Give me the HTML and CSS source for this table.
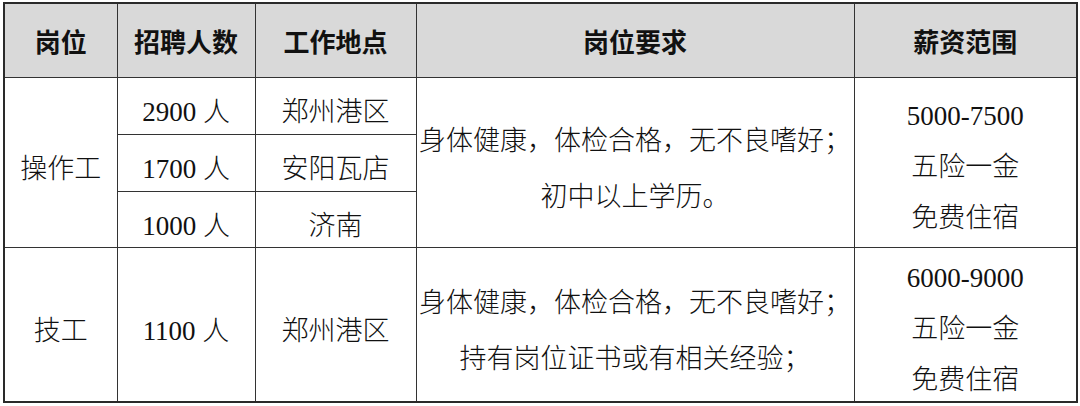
FILE: index.html
```html
<!DOCTYPE html>
<html lang="zh-CN">
<head>
<meta charset="utf-8">
<title>招聘岗位</title>
<link rel="stylesheet" href="styles.css">
</head>
<body>
<table class="jobs">
  <colgroup>
    <col class="c-pos">
    <col class="c-num">
    <col class="c-loc">
    <col class="c-req">
    <col class="c-pay">
  </colgroup>
  <thead>
    <tr class="head">
      <th>岗位</th>
      <th>招聘人数</th>
      <th>工作地点</th>
      <th>岗位要求</th>
      <th>薪资范围</th>
    </tr>
  </thead>
  <tbody>
    <tr class="sub">
      <td rowspan="3">操作工</td>
      <td>2900 人</td>
      <td>郑州港区</td>
      <td rowspan="3" class="req">
        <div class="rl">身体健康，体检合格，无不良嗜好；</div>
        <div class="rl">初中以上学历。</div>
      </td>
      <td rowspan="3" class="pay">
        <div class="paybox">
          <div class="pl">5000-7500</div>
          <div class="pl">五险一金</div>
          <div class="pl">免费住宿</div>
        </div>
      </td>
    </tr>
    <tr class="sub">
      <td>1700 人</td>
      <td>安阳瓦店</td>
    </tr>
    <tr class="sub last">
      <td>1000 人</td>
      <td>济南</td>
    </tr>
    <tr class="tall">
      <td>技工</td>
      <td>1100 人</td>
      <td>郑州港区</td>
      <td class="req">
        <div class="rl">身体健康，体检合格，无不良嗜好；</div>
        <div class="rl">持有岗位证书或有相关经验；</div>
      </td>
      <td class="pay">
        <div class="paybox">
          <div class="pl">6000-9000</div>
          <div class="pl">五险一金</div>
          <div class="pl">免费住宿</div>
        </div>
      </td>
    </tr>
  </tbody>
</table>
</body>
</html>
```

FILE: styles.css
```css
html, body {
  margin: 0;
  padding: 0;
  background: #ffffff;
}

body {
  padding: 2px 0 0 3px;
}

.jobs {
  border-collapse: collapse;
  table-layout: fixed;
  width: 1073px;
  font-family: "Liberation Serif", "Noto Sans CJK SC", serif;
  font-size: 27px;
  font-weight: 300;
  color: #111111;
  border: 2px solid #2a2a2a;
}

.c-pos { width: 113px; }
.c-num { width: 138px; }
.c-loc { width: 161px; }
.c-req { width: 438px; }
.c-pay { width: 223px; }

.jobs th,
.jobs td {
  border: 1px solid #333333;
  text-align: center;
  vertical-align: middle;
  padding: 0;
}

.jobs th {
  background: #d9d9d9;
  font-family: "Noto Sans CJK SC", sans-serif;
  font-weight: 700;
  font-size: 26px;
  height: 73px;
  color: #111111;
}

.jobs td {
  padding-top: 12px;
  line-height: 30px;
}

.sub td { height: 44px; }
.sub.last td { height: 43px; }
.tall td { height: 141px; }

.rl {
  line-height: 56px;
}

.jobs td.pay {
  padding-top: 0;
}

.paybox {
  height: 143px;
}

.pl {
  line-height: 51px;
}
```
